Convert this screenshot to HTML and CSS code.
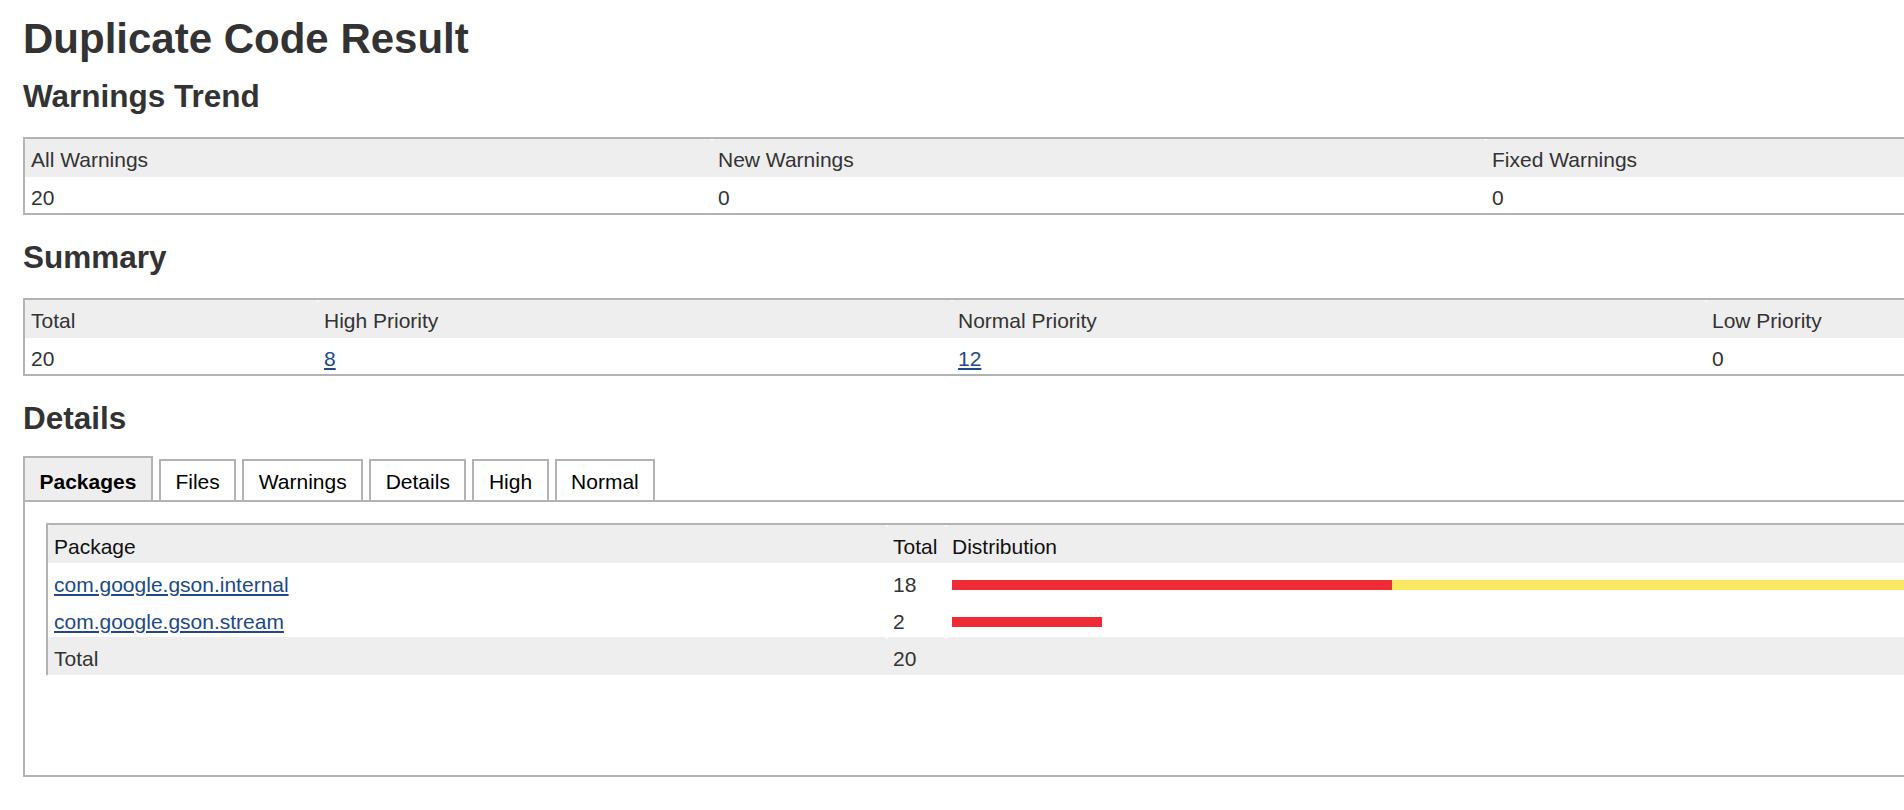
FILE: index.html
```html
<!DOCTYPE html>
<html lang="en">
<head>
<meta charset="utf-8">
<title>Duplicate Code Result</title>
<link rel="stylesheet" href="styles.css">
</head>
<body>
<main class="page">
  <h1 class="title">Duplicate Code Result</h1>

  <h2 class="section-title first">Warnings Trend</h2>
  <table class="grid">
    <thead>
      <tr><th class="t1-c1">All Warnings</th><th class="t1-c2">New Warnings</th><th>Fixed Warnings</th></tr>
    </thead>
    <tbody>
      <tr><td>20</td><td>0</td><td>0</td></tr>
    </tbody>
  </table>

  <h2 class="section-title">Summary</h2>
  <table class="grid">
    <thead>
      <tr><th class="t2-c1">Total</th><th class="t2-c2">High Priority</th><th class="t2-c3">Normal Priority</th><th>Low Priority</th></tr>
    </thead>
    <tbody>
      <tr><td>20</td><td><a class="link" href="#">8</a></td><td><a class="link" href="#">12</a></td><td>0</td></tr>
    </tbody>
  </table>

  <h2 class="section-title details-title">Details</h2>
  <section class="tabs">
    <div class="tab-bar">
      <span class="tab active">Packages</span>
      <span class="tab">Files</span>
      <span class="tab">Warnings</span>
      <span class="tab">Details</span>
      <span class="tab">High</span>
      <span class="tab">Normal</span>
    </div>
    <div class="tab-panel">
      <table class="pkg">
        <thead>
          <tr><th class="p-name">Package</th><th class="p-total">Total</th><th>Distribution</th></tr>
        </thead>
        <tbody>
          <tr>
            <td><a class="link" href="#">com.google.gson.internal</a></td>
            <td>18</td>
            <td><div class="dist"><span class="bar high" style="width:440px"></span><span class="bar normal" style="width:894px"></span></div></td>
          </tr>
          <tr>
            <td><a class="link" href="#">com.google.gson.stream</a></td>
            <td>2</td>
            <td><div class="dist"><span class="bar high" style="width:150px"></span></div></td>
          </tr>
        </tbody>
        <tfoot>
          <tr><td>Total</td><td>20</td><td></td></tr>
        </tfoot>
      </table>
    </div>
  </section>
</main>
</body>
</html>
```

FILE: styles.css
```css
html {
  overflow: hidden;
}

body {
  margin: 0;
  background: #ffffff;
  color: #333333;
  font-family: "Liberation Sans", Arial, Helvetica, sans-serif;
}

.page {
  width: 2298px;
  padding: 15px 0 0 23px;
}

.title {
  margin: 0;
  font-size: 42px;
  line-height: 48px;
  font-weight: bold;
  color: #333333;
}

.section-title {
  margin: 25px 0 24px;
  font-size: 31.5px;
  line-height: 34px;
  font-weight: bold;
  color: #333333;
}

.section-title.first {
  margin-top: 16px;
}

.section-title.details-title {
  margin-bottom: 21px;
}

.grid {
  width: 2298px;
  border-collapse: separate;
  border-spacing: 0;
  border-top: 2px solid #b3b3b3;
  border-left: 2px solid #b3b3b3;
  border-bottom: 2px solid #b3b3b3;
  font-size: 21px;
  line-height: 23px;
}

.grid th,
.grid td {
  box-sizing: border-box;
  text-align: left;
  vertical-align: top;
}

.grid th {
  background: #eeeeee;
  font-weight: normal;
  color: #333333;
  padding: 9px 6px 6px;
  border-radius: 3px 3px 0 0;
}

.grid td {
  padding: 9px 6px 4px;
}

.t1-c1 { width: 687px; }
.t1-c2 { width: 774px; }
.t2-c1 { width: 293px; }
.t2-c2 { width: 634px; }
.t2-c3 { width: 754px; }

.link {
  color: #204a87;
  text-decoration: underline;
}

.tab-bar {
  display: flex;
  align-items: flex-end;
  gap: 6px;
}

.tab {
  border: 2px solid #b3b3b3;
  border-bottom: 0;
  padding: 8px 14.5px 6px;
  font-size: 21px;
  line-height: 25px;
  color: #000000;
  background: #ffffff;
}

.tab.active {
  background: #eeeeee;
  font-weight: bold;
  padding-top: 11px;
}

.tab-panel {
  box-sizing: border-box;
  width: 2298px;
  border: 2px solid #b3b3b3;
  padding: 21px 21px 100px;
}

.pkg {
  width: 100%;
  border-collapse: separate;
  border-spacing: 0;
  border-top: 2px solid #b3b3b3;
  border-left: 2px solid #b3b3b3;
  font-size: 21px;
  line-height: 23px;
}

.pkg th,
.pkg td {
  box-sizing: border-box;
  text-align: left;
  vertical-align: middle;
}

.pkg th {
  background: #eeeeee;
  font-weight: normal;
  color: #111111;
  padding: 10px 6px 5px;
  border-radius: 3px 3px 0 0;
}

.pkg tbody td {
  padding: 10px 6px 4px;
  color: #333333;
}

.pkg tfoot td {
  background: #eeeeee;
  padding: 10px 6px 5px;
  color: #333333;
  border-radius: 3px 3px 0 0;
}

.p-name { width: 839px; }
.p-total { width: 59px; }

.dist {
  display: flex;
  height: 10px;
}

.bar {
  display: block;
  height: 10px;
}

.bar.high {
  background: #ef2b36;
}

.bar.normal {
  background: #fbe762;
}
```
